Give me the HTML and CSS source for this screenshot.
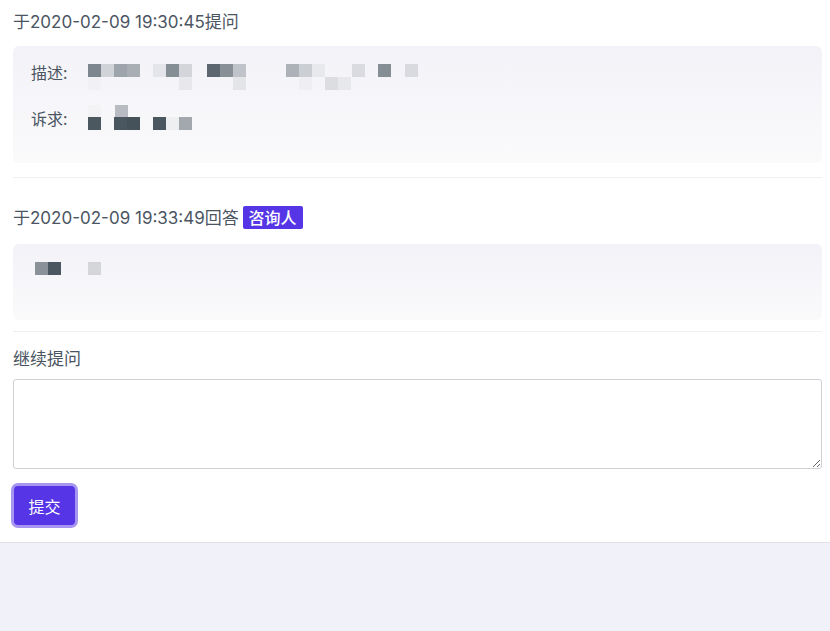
FILE: index.html
```html
<!DOCTYPE html>
<html lang="zh-CN">
<head>
    <meta charset="utf-8" />
    <link rel="stylesheet" href="styles.css">
    <title>咨询详情</title>
</head>
<body>
    <div class="main">
        <div class="qhead">于2020-02-09 19:30:45提问</div>
        <div class="qbox">
            <div class="qrow">
                <span class="qlabel">描述:</span>
                <svg class="mosaic" width="340" height="36" viewBox="0 0 340 36">
                    <rect x="0" y="5" width="13" height="13" fill="#7d868e"/>
                    <rect x="13" y="5" width="13" height="13" fill="#d0d3d8"/>
                    <rect x="26" y="5" width="13" height="13" fill="#9ea4ab"/>
                    <rect x="39" y="5" width="13" height="13" fill="#a8aeb4"/>
                    <rect x="65" y="5" width="13" height="13" fill="#e4e5ea"/>
                    <rect x="78" y="5" width="13" height="13" fill="#858d95"/>
                    <rect x="91" y="5" width="13" height="13" fill="#d3d5da"/>
                    <rect x="119" y="5" width="13" height="13" fill="#5c6670"/>
                    <rect x="132" y="5" width="13" height="13" fill="#888f97"/>
                    <rect x="145" y="5" width="13" height="13" fill="#c0c3ca"/>
                    <rect x="198" y="5" width="13" height="13" fill="#adb2b8"/>
                    <rect x="211" y="5" width="13" height="13" fill="#cbced3"/>
                    <rect x="224" y="5" width="13" height="13" fill="#e8e9ed"/>
                    <rect x="264" y="5" width="13" height="13" fill="#dadbe0"/>
                    <rect x="290" y="5" width="13" height="13" fill="#858e94"/>
                    <rect x="317" y="5" width="13" height="13" fill="#d9dadf"/>
                    <rect x="0" y="18" width="13" height="13" fill="#f1f1f5"/>
                    <rect x="91" y="18" width="13" height="13" fill="#e7e7ec"/>
                    <rect x="145" y="18" width="13" height="13" fill="#e4e5e9"/>
                    <rect x="211" y="18" width="13" height="13" fill="#efeff3"/>
                    <rect x="237" y="18" width="13" height="13" fill="#dcdde1"/>
                    <rect x="250" y="18" width="13" height="13" fill="#e7e8eb"/>
                </svg>
            </div>
            <div class="qrow">
                <span class="qlabel">诉求:</span>
                <svg class="mosaic" width="120" height="26" viewBox="0 0 120 26">
                    <rect x="0" y="0" width="13" height="12" fill="#f3f3f6"/>
                    <rect x="27" y="0" width="13" height="12" fill="#b8bcc2"/>
                    <rect x="0" y="12" width="13" height="13" fill="#4b5860"/>
                    <rect x="26" y="12" width="13" height="13" fill="#4a5760"/>
                    <rect x="39" y="12" width="13" height="13" fill="#465259"/>
                    <rect x="65" y="12" width="13" height="13" fill="#4b5760"/>
                    <rect x="78" y="12" width="13" height="13" fill="#eeeff1"/>
                    <rect x="91" y="12" width="13" height="13" fill="#a2a8ae"/>
                </svg>
            </div>
        </div>
        <div class="divider"></div>

        <div class="qhead ahead">于2020-02-09 19:33:49回答 <span class="badge">咨询人</span></div>
        <div class="qbox abox">
            <svg class="mosaic" width="70" height="13" viewBox="0 0 70 13">
                <rect x="0" y="0" width="13" height="13" fill="#8a9198"/>
                <rect x="13" y="0" width="13" height="13" fill="#4b5760"/>
                <rect x="53" y="0" width="13" height="13" fill="#d4d6da"/>
            </svg>
        </div>
        <div class="divider divider2"></div>

        <div class="asklabel">继续提问</div>
        <textarea class="askinput"></textarea>
        <button class="submitbut">提交</button>
    </div>
</body>
</html>
```

FILE: styles.css
```css
body {
    margin: 0;
    background-color: #f1f1f9;
    font-family: "Inter", "Noto Sans CJK SC", sans-serif;
    color: #4b5562;
}
.main {
    background-color: #fff;
    padding: 8px 8px 17px 13px;
    border-bottom: 1px solid #e0e0e6;
}
.qhead {
    font-size: 17px;
    line-height: 28px;
    margin-bottom: 10px;
}
.qbox {
    border-radius: 6px;
    background: linear-gradient(#f3f2f8, #fafafb);
    padding: 13px 18px 0 18px;
    height: 104px;
}
.qrow {
    display: flex;
    align-items: flex-start;
    margin-bottom: 10px;
}
.qlabel {
    font-family: "Noto Sans CJK SC", sans-serif;
    font-size: 16px;
    line-height: 26px;
    width: 57px;
}
.mosaic {
    display: block;
}
.divider {
    height: 1px;
    background-color: #f0f0f2;
    margin-top: 14px;
}
.ahead {
    margin-top: 26px;
    margin-bottom: 12px;
}
.badge {
    display: inline-block;
    background-color: #5535e6;
    color: #fff;
    font-family: "Noto Sans CJK SC", sans-serif;
    font-size: 16px;
    font-weight: 500;
    line-height: 23px;
    padding: 0 6px;
    border-radius: 2px;
    margin-left: -1px;
    vertical-align: top;
    margin-top: 2px;
}
.abox {
    height: 58px;
    padding: 18px 22px 0 22px;
}
.divider2 {
    margin-top: 11px;
}
.asklabel {
    font-family: "Noto Sans CJK SC", sans-serif;
    font-size: 17px;
    line-height: 22px;
    margin-top: 15px;
}
.askinput {
    display: block;
    box-sizing: border-box;
    width: 100%;
    height: 90px;
    margin-top: 10px;
    border: 1px solid #cdd1d6;
    border-radius: 3px;
    resize: vertical;
}
.submitbut {
    display: block;
    margin-top: 17px;
    margin-left: 1px;
    width: 61px;
    height: 39px;
    border: none;
    border-radius: 4px;
    background-color: #5535e6;
    color: #fff;
    font-family: "Noto Sans CJK SC", sans-serif;
    font-size: 16px;
    box-shadow: 0 0 0 3px #a795f2;
}
```
